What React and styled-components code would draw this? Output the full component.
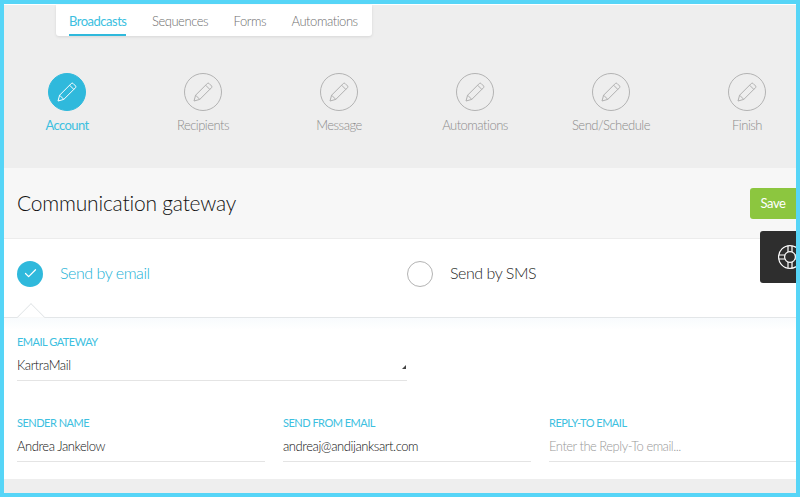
import React from 'react';
import styled, { createGlobalStyle } from 'styled-components';
import { Check } from 'lucide-react';

const GlobalStyle = createGlobalStyle`
  html, body {
    margin: 0;
    padding: 0;
    background: #fff;
  }
  body {
    font-family: Lato, 'Open Sans', sans-serif;
  }
`;

const tabs = ['Broadcasts', 'Sequences', 'Forms', 'Automations'];
const steps = ['Account', 'Recipients', 'Message', 'Automations', 'Send/Schedule', 'Finish'];

const PencilIcon = () => (
  <svg width="20" height="20" viewBox="0 0 20 20" fill="none" stroke="currentColor" strokeWidth="1" strokeLinejoin="round">
    <path d="M1 19 L2.6 13.2 L14.4 1.4 Q15.2 .8 16 1.4 L18.6 4 Q19.2 4.8 18.6 5.6 L6.8 17.4 Z" />
    <path d="M12.6 3.2 L16.8 7.4" />
    <path d="M2.6 13.2 L6.8 17.4" />
  </svg>
);

const BuoyIcon = () => (
  <svg width="26" height="26" viewBox="0 0 26 26" fill="none" stroke="#fff" strokeWidth="1.2" style={{ flexShrink: 0 }}>
    <circle cx="13" cy="13" r="11.4" />
    <circle cx="13" cy="13" r="5.4" />
    <path d="M11 1.8 V7.9 M15 1.8 V7.9 M11 18.1 V24.2 M15 18.1 V24.2" />
    <path d="M1.8 11 H7.9 M1.8 15 H7.9 M18.1 11 H24.2 M18.1 15 H24.2" />
  </svg>
);

const App = () => (
  <>
    <GlobalStyle />
    <Frame>
      <TopArea>
        <TabCard>
          {tabs.map((tab, i) => (
            <Tab key={tab} $active={i === 0}>{tab}</Tab>
          ))}
        </TabCard>
        <Steps>
          {steps.map((step, i) => (
            <Step key={step} $active={i === 0}>
              <StepCircle $active={i === 0}>
                <PencilIcon />
              </StepCircle>
              <StepLabel $active={i === 0}>{step}</StepLabel>
            </Step>
          ))}
        </Steps>
      </TopArea>

      <Header>
        <Title>Communication gateway</Title>
        <SaveButton>Save</SaveButton>
      </Header>

      <HelpBox>
        <BuoyIcon />
      </HelpBox>

      <ChannelRow>
        <Channel>
          <ChannelMark $checked>
            <Check size={15} strokeWidth={2} color="#fff" />
          </ChannelMark>
          <ChannelName $checked>Send by email</ChannelName>
        </Channel>
        <Channel>
          <ChannelMark />
          <ChannelName>Send by SMS</ChannelName>
        </Channel>
        <Pointer />
      </ChannelRow>

      <Form>
        <GatewayField>
          <FieldLabel>Email gateway</FieldLabel>
          <FieldValue>
            KartraMail
            <SelectCaret />
          </FieldValue>
        </GatewayField>
        <FieldRow>
          <div>
            <FieldLabel>Sender name</FieldLabel>
            <FieldValue>Andrea Jankelow</FieldValue>
          </div>
          <div>
            <FieldLabel>Send from email</FieldLabel>
            <FieldValue>andreaj@andijanksart.com</FieldValue>
          </div>
          <div>
            <FieldLabel>Reply-To email</FieldLabel>
            <FieldValue $placeholder>Enter the Reply-To email...</FieldValue>
          </div>
        </FieldRow>
      </Form>

      <BottomStrip />
    </Frame>
  </>
);

const Frame = styled.div`
  position: relative;
  box-sizing: border-box;
  width: 800px;
  height: 497px;
  border: 4px solid #56d5f7;
  overflow: hidden;
  background: #fff;
  display: flex;
  flex-direction: column;
`;

const TopArea = styled.div`
  height: 164px;
  box-sizing: border-box;
  border-top: 1px solid #fff;
  background: #eee;
  flex-shrink: 0;
`;

const TabCard = styled.div`
  display: flex;
  gap: 25.5px;
  box-sizing: border-box;
  width: 316px;
  height: 31px;
  margin-left: 52px;
  padding: 0 13px;
  background: #fff;
  border-radius: 0 0 3px 3px;
  box-shadow: 0 1px 3px rgba(0, 0, 0, 0.1);
`;

const Tab = styled.div`
  height: 31px;
  box-sizing: border-box;
  padding-top: 7px;
  font-size: 13px;
  font-weight: ${(p) => (p.$active ? 400 : 300)};
  line-height: 18px;
  letter-spacing: ${(p) => (p.$active ? '-0.5px' : '-0.45px')};
  color: ${(p) => (p.$active ? '#3cc0e0' : '#6f6f6f')};
  border-bottom: 2px solid ${(p) => (p.$active ? '#2fb9dc' : 'transparent')};
`;

const Steps = styled.div`
  display: grid;
  grid-template-columns: repeat(6, 126px);
  column-gap: 10px;
  margin-top: 37px;
`;

const Step = styled.div`
  display: flex;
  flex-direction: column;
  align-items: center;
  color: ${(p) => (p.$active ? '#3cc0e0' : '#8c8c8c')};
`;

const StepCircle = styled.div`
  box-sizing: border-box;
  width: 38px;
  height: 38px;
  border-radius: 50%;
  display: flex;
  align-items: center;
  justify-content: center;
  border: 1px solid ${(p) => (p.$active ? '#2fb9dc' : '#b3b3b3')};
  background: ${(p) => (p.$active ? '#2fb9dc' : 'transparent')};
  color: ${(p) => (p.$active ? '#fff' : '#b0b0b0')};
`;

const StepLabel = styled.div`
  margin-top: 5px;
  font-size: 13px;
  font-weight: ${(p) => (p.$active ? 400 : 300)};
  line-height: 18px;
  letter-spacing: ${(p) => (p.$active ? '-0.6px' : '-0.5px')};
`;

const Header = styled.div`
  height: 71px;
  box-sizing: border-box;
  flex-shrink: 0;
  display: flex;
  align-items: center;
  justify-content: space-between;
  padding-left: 13px;
  background: #f7f7f7;
  border-bottom: 1px solid #ececec;
`;

const Title = styled.h1`
  margin: 0 0 2px;
  font-size: 21px;
  font-weight: 300;
  letter-spacing: -0.2px;
  color: #111;
`;

const SaveButton = styled.button`
  width: 46px;
  height: 31px;
  padding: 0;
  border: 0;
  border-radius: 3px 0 0 3px;
  background: #8cc63f;
  color: #fff;
  font-family: inherit;
  font-size: 13px;
  letter-spacing: -0.4px;
`;

const HelpBox = styled.div`
  position: absolute;
  top: 227px;
  right: -4px;
  width: 40px;
  height: 52px;
  box-sizing: border-box;
  padding-left: 17px;
  display: flex;
  align-items: center;
  background: #2e2e2e;
  border-radius: 3px 0 0 3px;
`;

const ChannelRow = styled.div`
  position: relative;
  height: 79px;
  flex-shrink: 0;
  box-sizing: border-box;
  display: grid;
  grid-template-columns: 390px 1fr;
  padding: 21px 0 0 13px;
  border-bottom: 1px solid #e3e6e8;
`;

const Channel = styled.div`
  display: flex;
  align-items: center;
  gap: 17px;
  height: 27px;
`;

const ChannelMark = styled.div`
  box-sizing: border-box;
  width: 26px;
  height: 26px;
  border-radius: 50%;
  display: flex;
  align-items: center;
  justify-content: center;
  background: ${(p) => (p.$checked ? '#2fb9dc' : '#fff')};
  border: ${(p) => (p.$checked ? '0' : '1px solid #b3b3b3')};
`;

const ChannelName = styled.div`
  margin-bottom: 2px;
  font-size: 16px;
  font-weight: 300;
  letter-spacing: -0.45px;
  color: ${(p) => (p.$checked ? '#22b1d6' : '#1f1f1f')};
`;

const Pointer = styled.div`
  position: absolute;
  left: 17px;
  bottom: -10px;
  width: 20px;
  height: 20px;
  box-sizing: border-box;
  background: #fff;
  border-top: 1px solid #dfe3e5;
  border-left: 1px solid #dfe3e5;
  transform: rotate(45deg);
  clip-path: polygon(0 0, 100% 0, 100% 6%, 6% 100%, 0 100%);
`;

const Form = styled.div`
  flex: 1;
  box-sizing: border-box;
  padding: 17px 0 0 13px;
  background: linear-gradient(#f8fbfd, #fff 12px);
`;

const GatewayField = styled.div`
  width: 390px;
`;

const FieldRow = styled.div`
  display: grid;
  grid-template-columns: 248px 248px 247px;
  column-gap: 18px;
  margin-top: 35px;
`;

const FieldLabel = styled.div`
  font-size: 11px;
  line-height: 14px;
  letter-spacing: -0.5px;
  text-transform: uppercase;
  color: #3cc0e0;
`;

const FieldValue = styled.div`
  position: relative;
  box-sizing: border-box;
  height: 32px;
  padding-top: 7px;
  font-size: 13px;
  font-weight: 300;
  line-height: 18px;
  letter-spacing: ${(p) => (p.$placeholder ? '-0.5px' : '-0.42px')};
  color: ${(p) => (p.$placeholder ? '#999' : '#111')};
  border-bottom: 1px solid #e4e4e4;
`;

const SelectCaret = styled.span`
  position: absolute;
  right: 1px;
  top: 16px;
  width: 0;
  height: 0;
  border-bottom: 4px solid #444;
  border-left: 4px solid transparent;
`;

const BottomStrip = styled.div`
  height: 14px;
  flex-shrink: 0;
  background: #eee;
`;

export default App;
